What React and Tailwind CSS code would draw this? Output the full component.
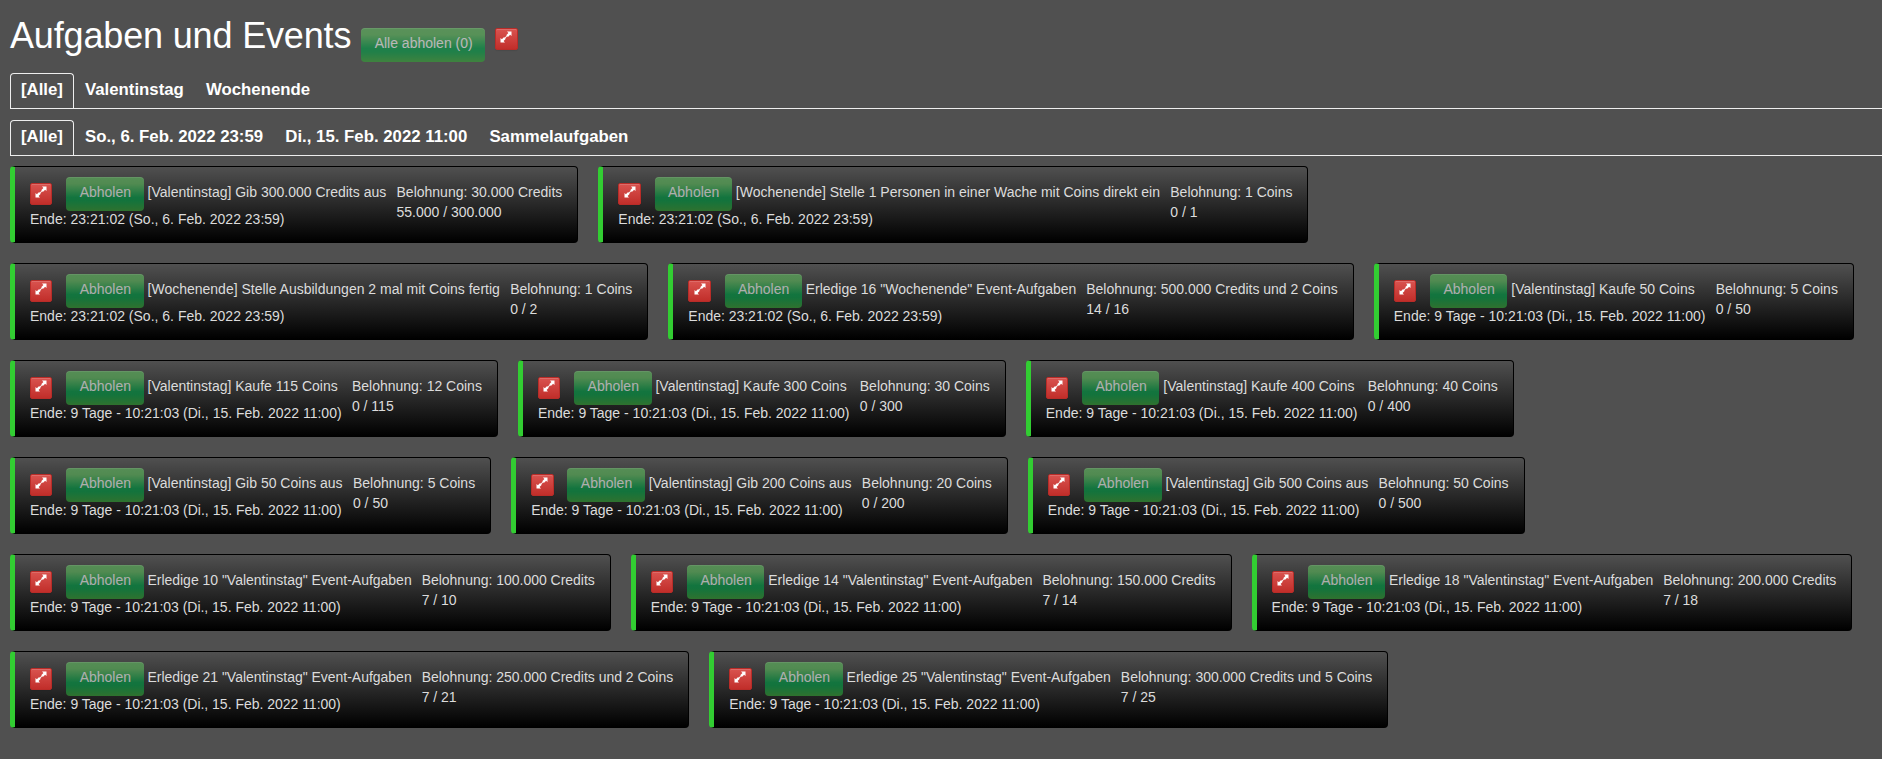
const SO = "23:21:02 (So., 6. Feb. 2022 23:59)";
const DI = "9 Tage - 10:21:03 (Di., 15. Feb. 2022 11:00)";

const rows = [
  [
    ["[Valentinstag] Gib 300.000 Credits aus", "30.000 Credits", "55.000 / 300.000", SO],
    ["[Wochenende] Stelle 1 Personen in einer Wache mit Coins direkt ein", "1 Coins", "0 / 1", SO],
  ],
  [
    ["[Wochenende] Stelle Ausbildungen 2 mal mit Coins fertig", "1 Coins", "0 / 2", SO],
    ['Erledige 16 "Wochenende" Event-Aufgaben', "500.000 Credits und 2 Coins", "14 / 16", SO],
    ["[Valentinstag] Kaufe 50 Coins", "5 Coins", "0 / 50", DI],
  ],
  [
    ["[Valentinstag] Kaufe 115 Coins", "12 Coins", "0 / 115", DI],
    ["[Valentinstag] Kaufe 300 Coins", "30 Coins", "0 / 300", DI],
    ["[Valentinstag] Kaufe 400 Coins", "40 Coins", "0 / 400", DI],
  ],
  [
    ["[Valentinstag] Gib 50 Coins aus", "5 Coins", "0 / 50", DI],
    ["[Valentinstag] Gib 200 Coins aus", "20 Coins", "0 / 200", DI],
    ["[Valentinstag] Gib 500 Coins aus", "50 Coins", "0 / 500", DI],
  ],
  [
    ['Erledige 10 "Valentinstag" Event-Aufgaben', "100.000 Credits", "7 / 10", DI],
    ['Erledige 14 "Valentinstag" Event-Aufgaben', "150.000 Credits", "7 / 14", DI],
    ['Erledige 18 "Valentinstag" Event-Aufgaben', "200.000 Credits", "7 / 18", DI],
  ],
  [
    ['Erledige 21 "Valentinstag" Event-Aufgaben', "250.000 Credits und 2 Coins", "7 / 21", DI],
    ['Erledige 25 "Valentinstag" Event-Aufgaben', "300.000 Credits und 5 Coins", "7 / 25", DI],
  ],
];

function ResizeButton() {
  return (
    <button className="flex h-[22px] w-[22.4px] shrink-0 justify-center rounded-[2px] border border-[#b92c28] bg-[linear-gradient(#d9534f,#c12e2a)] pt-[2px] shadow-[inset_0_1px_0_rgba(255,255,255,0.15),0_1px_1px_rgba(0,0,0,0.075)]">
      <svg viewBox="0 0 12 12" className="size-3" fill="#fff">
        <path d="M7 0.600H11.500V5.100L10.100 3.800 7.900 6 6.200 4.300 8.400 2.100zM5 11.500H0.500V7L1.900 8.300 4.100 6.100 5.800 7.800 3.600 10z" />
        <path d="M4.800 6.600L6.700 4.700 7.300 5.300 5.400 7.200z" />
      </svg>
    </button>
  );
}

function GreenButton({ children }) {
  return (
    <button className="h-[34px] shrink-0 rounded-[4px] bg-[linear-gradient(#5fb55f,#5cb45c_20%,#049a47_60%,#079a46_70%,#379e36)] pr-[12.6px] pb-1 pl-[13.4px] text-sm leading-5 whitespace-nowrap text-[#f0f0f0] opacity-65 shadow-[inset_0_1px_0_rgba(255,255,255,0.15)]">
      {children}
    </button>
  );
}

function Card({ task: [title, reward, progress, end] }) {
  const wide = title.startsWith("Erledige");
  return (
    <article
      className={`flex h-[77px] rounded-[4px] border border-l-[5px] border-black border-l-[#32cd32] bg-[linear-gradient(#505050,#000)] pt-[10px] pr-[15px] pl-[15px] text-sm leading-5 whitespace-nowrap text-[#dcdcdc] ${
        wide ? "gap-[10px] tracking-[-0.018px]" : "gap-[10.3px]"
      }`}
    >
      <div>
        <div className="flex h-[34px]">
          <div className="mr-[13.9px] pt-[6px]">
            <ResizeButton />
          </div>
          <GreenButton>Abholen</GreenButton>
          <span className="ml-[3.9px] pt-[5px]">{title}</span>
        </div>
        <div className="-mt-[2px]">Ende: {end}</div>
      </div>
      <div className="pt-[5px]">
        <div>Belohnung: {reward}</div>
        <div>{progress}</div>
      </div>
    </article>
  );
}

function Tabs({ items }) {
  return (
    <nav className="flex h-[36px] border-b border-[#eee] text-[16.8px] leading-5 font-bold text-white">
      {items.map((label, i) => (
        <a
          key={label}
          className={
            i === 0
              ? "mr-[1px] rounded-t-[4px] border border-b-0 border-[#eee] px-[10px] pt-[6px]"
              : "mr-[2.2px] px-[10px] pt-[7px]"
          }
        >
          {label}
        </a>
      ))}
    </nav>
  );
}

export default function App() {
  return (
    <main className="h-[759px] overflow-hidden bg-[#505050] pl-[10px] font-['Liberation_Sans',Arial,sans-serif]">
      <header className="flex h-[73px] items-start">
        <h1 className="pt-[16px] text-4xl leading-10 tracking-[-0.16px] whitespace-nowrap text-white">
          Aufgaben und Events
        </h1>
        <div className="ml-[10px] pt-[28px]">
          <GreenButton>Alle abholen (0)</GreenButton>
        </div>
        <div className="ml-[10px] pt-[28px]">
          <ResizeButton />
        </div>
      </header>
      <Tabs items={["[Alle]", "Valentinstag", "Wochenende"]} />
      <div className="h-[11px]" />
      <Tabs items={["[Alle]", "So., 6. Feb. 2022 23:59", "Di., 15. Feb. 2022 11:00", "Sammelaufgaben"]} />
      <section className="mt-[10px] flex flex-col gap-5">
        {rows.map((row, i) => (
          <div key={i} className="flex gap-5">
            {row.map((task) => (
              <Card key={task[0]} task={task} />
            ))}
          </div>
        ))}
      </section>
    </main>
  );
}
